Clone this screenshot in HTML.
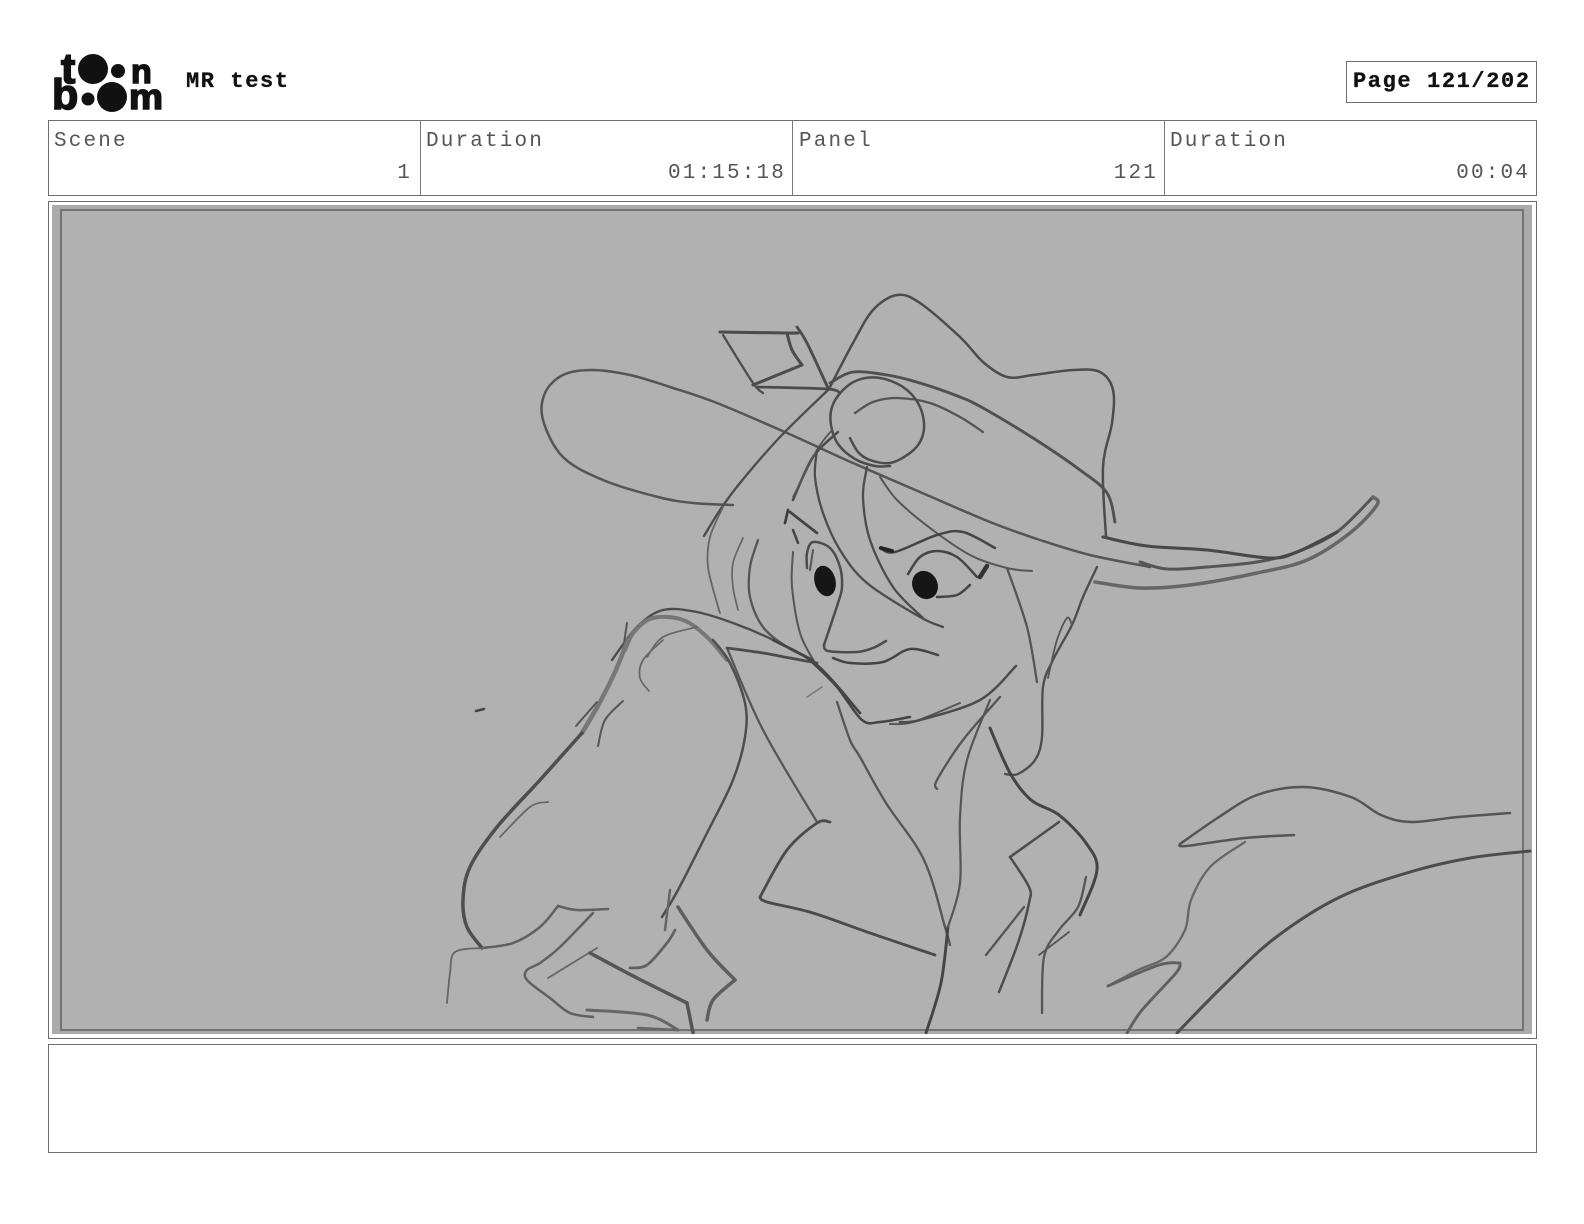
<!DOCTYPE html>
<html><head><meta charset="utf-8"><style>
html,body{margin:0;padding:0;background:#fff;width:1584px;height:1224px;overflow:hidden}
.a{position:absolute;box-sizing:border-box}
.m{font-family:"Liberation Mono",monospace;color:#555;font-size:21px;letter-spacing:2.15px;line-height:24px;white-space:pre}
.b{font-family:"Liberation Mono",monospace;font-weight:bold;color:#111;font-size:22px;letter-spacing:1.6px;line-height:24px;white-space:pre;-webkit-text-stroke:.3px #111}
</style></head><body>
<div class="a" style="left:48px;top:120px;width:1489px;height:76px;border:1.5px solid #6f6f6f"></div>
<div class="a" style="left:420px;top:120px;width:1px;height:76px;background:#777"></div>
<div class="a" style="left:792px;top:120px;width:1px;height:76px;background:#777"></div>
<div class="a" style="left:1164px;top:120px;width:1px;height:76px;background:#777"></div>
<div class="a m" style="left:54px;top:130px">Scene</div>
<div class="a m" style="left:426px;top:130px">Duration</div>
<div class="a m" style="left:799px;top:130px">Panel</div>
<div class="a m" style="left:1170px;top:130px">Duration</div>
<div class="a m" style="right:1172px;top:162px">1</div>
<div class="a m" style="right:798px;top:162px">01:15:18</div>
<div class="a m" style="right:426px;top:162px">121</div>
<div class="a m" style="right:54px;top:162px">00:04</div>
<div class="a" style="left:1346px;top:61px;width:191px;height:42px;border:1.5px solid #6f6f6f"></div>
<div class="a b" style="left:1353px;top:70px">Page 121/202</div>
<div class="a b" style="left:186px;top:70px">MR test</div>
<svg class="a" style="left:0;top:0" width="200" height="120" viewBox="0 0 200 120">
<g font-family="Liberation Sans,sans-serif" font-weight="bold" fill="#111" stroke="#111" stroke-width="1.6">
<text x="61" y="83" font-size="43">t</text>
<text x="131" y="83" font-size="34">n</text>
<text x="52" y="109" font-size="43">b</text>
<text x="129" y="109" font-size="36" textLength="34" lengthAdjust="spacingAndGlyphs">m</text>
</g>
<circle cx="93" cy="69" r="15" fill="#111"/><circle cx="118" cy="71" r="7" fill="#111"/>
<circle cx="88" cy="99" r="6.5" fill="#111"/><circle cx="112" cy="97" r="15" fill="#111"/>
</svg>
<div class="a" style="left:48px;top:201px;width:1489px;height:838px;border:1.5px solid #6a6a6a"></div>
<div class="a" style="left:52px;top:205px;width:1480px;height:829px;background:#aaa"></div>
<div class="a" style="left:60px;top:209px;width:1464px;height:822px;background:#b1b1b1;border:2px solid #737373"></div>
<div class="a" style="left:48px;top:1044px;width:1489px;height:109px;border:1.5px solid #6f6f6f;background:#fff"></div>
<svg id="s" class="a" style="left:0;top:0" width="1584" height="1224" viewBox="0 0 1584 1224">
<defs><clipPath id="c"><rect x="52" y="205" width="1480" height="829"/></clipPath></defs>
<g clip-path="url(#c)"><g id="g" style="filter:blur(.35px)" fill="none" stroke-linecap="round" stroke-linejoin="round">
<ellipse cx="825" cy="581" rx="10.5" ry="15.5" transform="rotate(-15 825 581)" fill="#161616"/>
<ellipse cx="925" cy="585" rx="12.5" ry="14.5" transform="rotate(-28 925 585)" fill="#161616"/>
</g></g></svg>
<script>
var L=[
[2,"#555","733,505 693,503 658,497 603,480 563,457 543,420 545,393 563,375 592,370 630,375 670,387 717,403 787,433 853,463 920,492 990,522 1040,540 1090,555 1150,567"],
[2.5,"#555","1140,562 1167,569 1207,567 1257,562 1297,552 1337,532 1373,497"],
[3,"#666","1095,582 1140,588 1190,585 1257,573 1307,560 1350,533 1377,505 1373,497"],
[2.6,"#484848","1103,537 1147,546 1207,550 1270,558 1297,552 1337,532"],
[2,"#4c4c4c","830,387 853,343 873,310 897,295 920,303 960,337 983,362 1007,377 1033,375 1073,370 1100,372 1113,390 1112,423 1103,467 1106,537"],
[2.4,"#505050","830,383 853,372 887,375 920,383 960,397 983,408 1033,438 1080,470 1107,493 1115,522"],
[1.8,"#555","855,413 873,402 897,398 930,403 960,417 983,432"],
[2,"#4c4c4c","850,438 858,452 870,460 890,463 910,453 921,440 924,423 918,403 903,387 880,378 858,380 842,391 832,407 831,425 838,444 855,459 875,466 890,466"],
[2.6,"#4c4c4c","720,332 787,333 798,333"],
[1.8,"#4c4c4c","723,335 753,383 763,393"],
[2.2,"#4c4c4c","758,387 827,389 840,393"],
[2.6,"#4c4c4c","787,333 792,350 802,365"],
[2.6,"#4c4c4c","802,365 753,385"],
[2.4,"#4c4c4c","797,327 807,343 828,388"],
[1.8,"#4c4c4c","828,390 780,437 740,483 720,510 704,536"],
[1.3,"#666","723,507 710,537 708,567 717,603 720,613"],
[1.2,"#666","743,538 733,563 733,587 738,610"],
[1.8,"#555","758,540 750,567 750,597 763,627 787,647 813,660"],
[2,"#4c4c4c","838,432 813,457 793,500"],
[1.3,"#555","832,430 817,450 793,497"],
[1.8,"#4c4c4c","817,450 815,477 823,513 840,550 867,583 920,617 943,627"],
[1.8,"#4c4c4c","867,467 863,497 870,540 893,587 923,618"],
[1.5,"#555","880,477 897,500 930,528 970,555 1007,568 1032,571"],
[2.2,"#3c3c3c","788,510 785,523"],
[2.2,"#444","790,512 817,533"],
[2,"#444","793,530 798,543"],
[2,"#4c4c4c","807,568 807,553 813,542 830,548 840,567 842,587 838,603 824,645"],
[2,"#4c4c4c","824,645 828,651 857,652 873,648 886,641"],
[1.5,"#555","813,550 810,570"],
[1.5,"#555","793,552 792,587 800,633 815,663"],
[2,"#444","880,548 895,552 937,535 963,532 995,548"],
[3.5,"#222","881,548 892,551"],
[2,"#444","908,574 920,557 937,551 957,557 977,577"],
[4,"#333","980,577 987,566"],
[2,"#444","937,597 957,595 970,585"],
[2,"#444","833,658 850,663 883,662 910,649 938,655"],
[2,"#444","813,663 837,687 862,720 880,722 910,717"],
[1.5,"#555","890,724 913,722 960,703"],
[2,"#4c4c4c","900,722 920,720 980,700 1016,666"],
[1.8,"#555","1007,568 1027,627 1037,682"],
[1.8,"#4c4c4c","1097,567 1083,597 1072,625 1053,660 1043,687 1042,737 1035,760 1018,774 1005,774"],
[1.3,"#555","1072,625 1067,618 1057,640 1048,678"],
[1.8,"#4c4c4c","612,660 637,627 663,610 697,612 733,623 767,637 813,660"],
[3.5,"#777","625,650 634,632 653,618 683,620 707,637 727,660"],
[1.2,"#666","647,657 663,637 697,627"],
[1.5,"#555","627,623 622,657"],
[4,"#777","628,640 615,672 600,702 582,733"],
[3,"#4e4e4e","582,733 540,780 497,827 470,867 463,900 467,927 482,948"],
[1.5,"#555","597,702 576,726"],
[1.5,"#555","623,701 605,720 598,746"],
[1.2,"#666","663,640 643,660 640,678 649,691"],
[1.2,"#666","548,802 530,807 500,837"],
[2,"#4e4e4e","713,640 730,663 745,703 745,737 733,780 707,833 678,890 662,917"],
[1.7,"#555","727,648 763,730 817,822"],
[2.3,"#4c4c4c","727,648 763,653 790,658 817,663"],
[2.2,"#444","773,640 817,665 860,713"],
[2.3,"#4a4a4a","830,822 817,823 787,850 760,897"],
[2.3,"#4a4a4a","760,897 767,902 813,913 870,933 935,955"],
[2,"#606060","482,948 513,943 540,927 558,906"],
[2,"#606060","558,906 577,910 608,909"],
[2,"#606060","593,913 560,947 540,963 527,970 527,980 550,998 570,1013 593,1017"],
[2.5,"#666","587,1010 647,1015 678,1030"],
[2,"#666","638,1028 678,1030"],
[1.3,"#666","447,1003 450,973 455,952 482,948"],
[1.3,"#666","548,978 597,948"],
[3,"#555","590,953 637,978 687,1003"],
[3,"#555","687,1003 693,1033"],
[2.2,"#606060","630,968 647,965 667,943 675,930"],
[2,"#666","670,890 665,930"],
[3,"#5e5e5e","678,907 707,950 735,980"],
[3,"#5e5e5e","735,980 713,1000 707,1020"],
[2,"#444","476,711 484,709"],
[1,"#777","807,697 822,687"],
[1.8,"#555","837,702 850,740 860,757 886,803 924,860 945,927 950,945"],
[2.4,"#444","948,927 941,983 926,1033"],
[1.7,"#555","990,700 967,760 960,817 960,883 948,927"],
[1.8,"#555","1000,697 963,740 937,780 937,789"],
[2.5,"#444","990,728 1010,773 1031,800 1059,815 1086,843 1097,870 1080,915"],
[2,"#4c4c4c","1059,822 1010,857"],
[2,"#4c4c4c","1010,857 1029,887 1029,903 1018,943 999,992"],
[1.8,"#555","1024,907 986,955"],
[1.8,"#555","1086,877 1078,907 1059,930 1044,957 1042,1013"],
[1.3,"#555","1069,932 1039,955"],
[2,"#555","1510,813 1458,817 1411,822 1381,815 1351,797 1304,787 1257,795 1219,817 1180,844"],
[2,"#555","1180,844 1186,846 1245,838 1294,835"],
[1.8,"#666","1245,842 1210,867 1191,900 1185,930 1166,957 1138,970 1108,986"],
[2.4,"#606060","1108,986 1159,965 1180,963"],
[2.4,"#606060","1180,963 1176,973 1142,1010 1127,1033"],
[2.5,"#4c4c4c","1530,851 1470,858 1410,872 1340,897 1275,938 1222,987 1177,1033"]
];
var g=document.getElementById("g");
L.forEach(function(l){
 var p=l[2].split(" ").map(function(s){return s.split(",").map(Number)});
 var d="M"+p[0][0]+" "+p[0][1];
 for(var i=0;i<p.length-1;i++){
  var a=p[i-1]||p[i],b=p[i],c=p[i+1],e=p[i+2]||c;
  d+="C"+(b[0]+(c[0]-a[0])/6).toFixed(1)+" "+(b[1]+(c[1]-a[1])/6).toFixed(1)+" "+(c[0]-(e[0]-b[0])/6).toFixed(1)+" "+(c[1]-(e[1]-b[1])/6).toFixed(1)+" "+c[0]+" "+c[1];
 }
 var q=document.createElementNS("http://www.w3.org/2000/svg","path");
 q.setAttribute("d",d);q.setAttribute("stroke",l[1]);q.setAttribute("stroke-width",l[0]+0.5);
 g.appendChild(q);
});
</script>
</body></html>
